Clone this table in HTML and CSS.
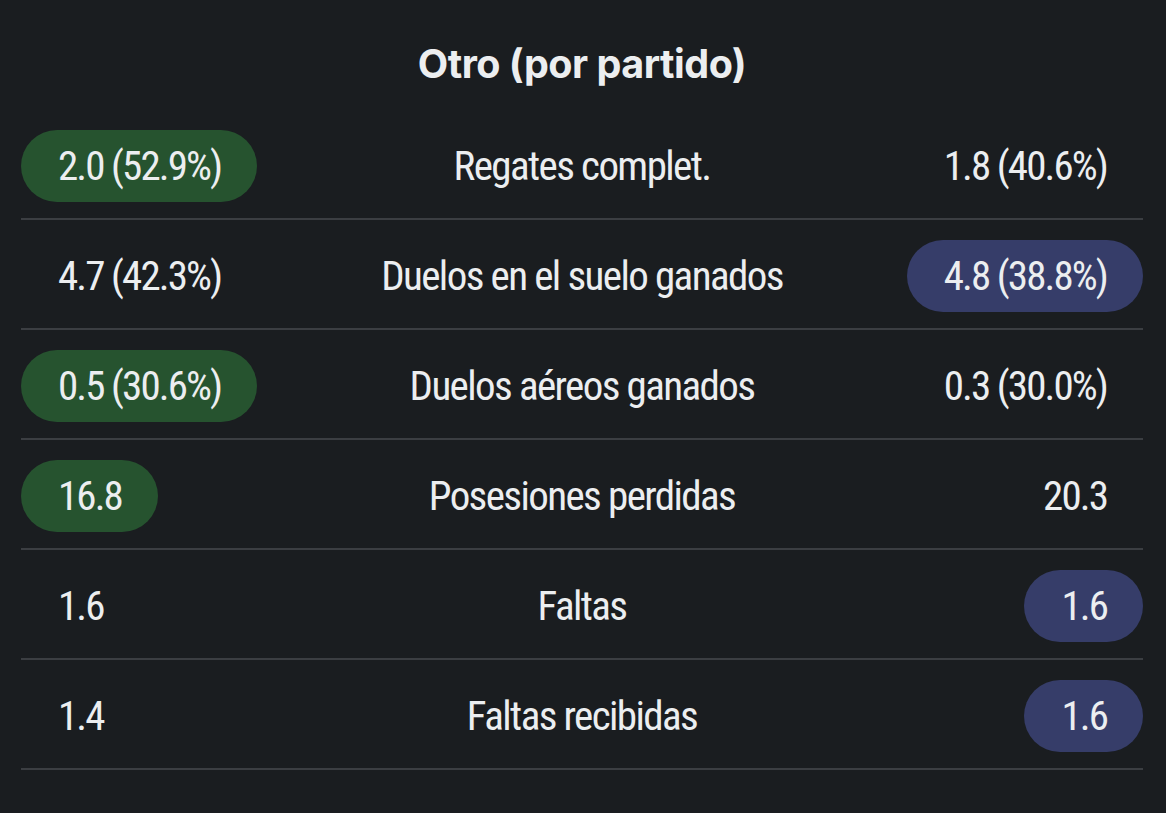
FILE: index.html
```html
<!DOCTYPE html>
<html lang="es">
<head>
<meta charset="utf-8">
<title>Otro (por partido)</title>
<link rel="stylesheet" href="styles.css">
</head>
<body>
<section class="stats">
  <h2 class="title">Otro (por partido)</h2>
  <div class="row">
    <div class="cell left"><span class="val win-home">2.0 (52.9%)</span></div>
    <div class="label">Regates complet.</div>
    <div class="cell right"><span class="val">1.8 (40.6%)</span></div>
  </div>
  <div class="row">
    <div class="cell left"><span class="val">4.7 (42.3%)</span></div>
    <div class="label">Duelos en el suelo ganados</div>
    <div class="cell right"><span class="val win-away">4.8 (38.8%)</span></div>
  </div>
  <div class="row">
    <div class="cell left"><span class="val win-home">0.5 (30.6%)</span></div>
    <div class="label">Duelos aéreos ganados</div>
    <div class="cell right"><span class="val">0.3 (30.0%)</span></div>
  </div>
  <div class="row">
    <div class="cell left"><span class="val win-home">16.8</span></div>
    <div class="label">Posesiones perdidas</div>
    <div class="cell right"><span class="val">20.3</span></div>
  </div>
  <div class="row">
    <div class="cell left"><span class="val">1.6</span></div>
    <div class="label">Faltas</div>
    <div class="cell right"><span class="val win-away">1.6</span></div>
  </div>
  <div class="row">
    <div class="cell left"><span class="val">1.4</span></div>
    <div class="label">Faltas recibidas</div>
    <div class="cell right"><span class="val win-away">1.6</span></div>
  </div>
</section>
</body>
</html>
```

FILE: styles.css
```css
html, body {
  margin: 0;
  padding: 0;
  background: #1a1d20;
}
body {
  width: 1166px;
  height: 813px;
  overflow: hidden;
  color: #eceef0;
  font-family: "Roboto Condensed", "DejaVu Sans Condensed", sans-serif;
  font-stretch: condensed;
}
.stats {
  margin: 0 23px 0 21px;
}
.title {
  margin: 0;
  height: 110px;
  display: flex;
  align-items: center;
  justify-content: center;
  font-family: "Inter", "Noto Sans", sans-serif;
  font-stretch: normal;
  font-weight: 700;
  font-size: 39.5px;
  letter-spacing: -0.5px;
  padding-top: 18px;
  box-sizing: border-box;
  color: #eceef0;
}
.row {
  display: grid;
  grid-template-columns: 1fr auto 1fr;
  align-items: center;
  padding: 20px 0 16px;
  border-bottom: 2px solid #3b3e42;
}
.cell {
  display: flex;
}
.cell.left { justify-content: flex-start; }
.cell.right { justify-content: flex-end; }
.val {
  display: inline-flex;
  align-items: center;
  height: 72px;
  padding: 0 36px 0 37px;
  border-radius: 36px;
  font-size: 41px;
  letter-spacing: -1.9px;
  white-space: nowrap;
}
.win-home { background: #26532f; }
.win-away { background: #363d69; }
.label {
  font-size: 41px;
  letter-spacing: -1.6px;
  text-align: center;
  white-space: nowrap;
}
```
